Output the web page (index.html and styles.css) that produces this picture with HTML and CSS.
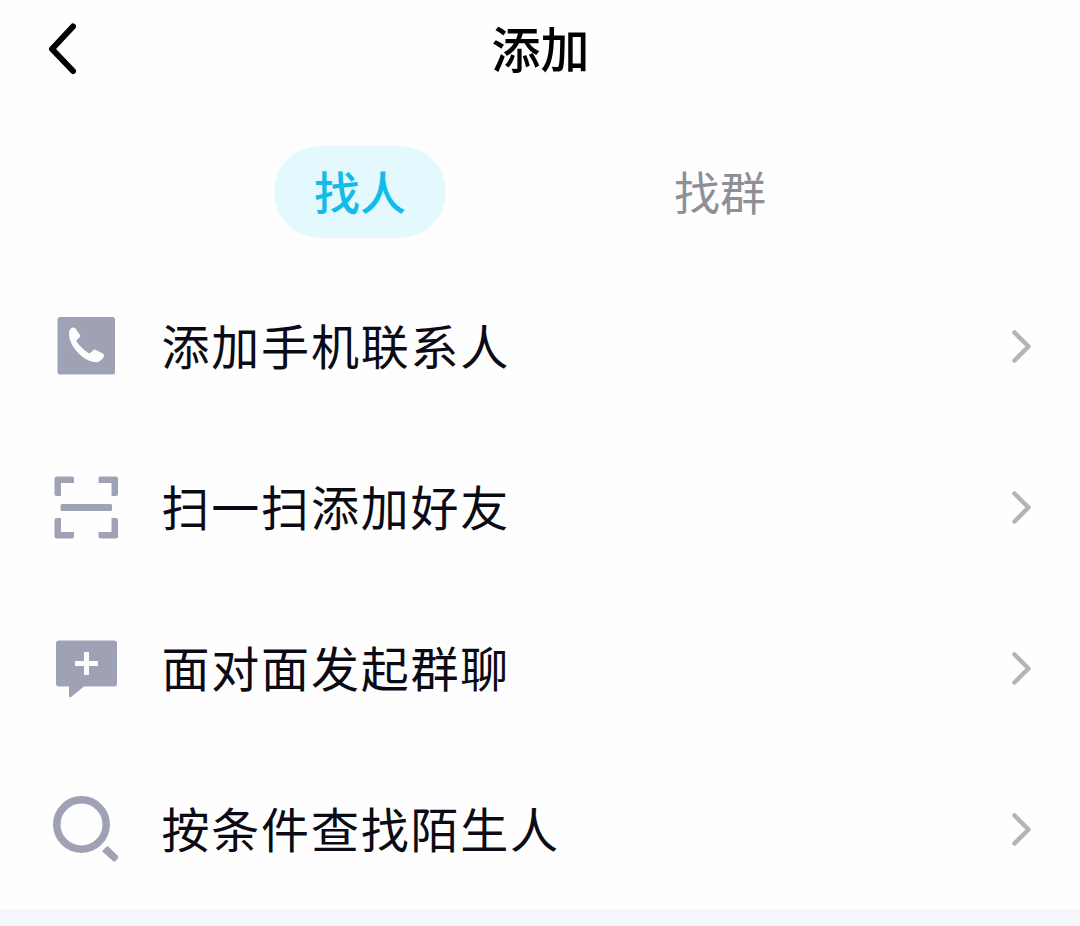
FILE: index.html
```html
<!DOCTYPE html>
<html lang="zh-CN">
<head>
<meta charset="utf-8">
<title>添加</title>
<link rel="stylesheet" href="styles.css">
</head>
<body>
<main class="page">
  <header class="header">
    <svg class="back" viewBox="0 0 32 54"><path d="M26 4.500 5 27 26 49"/></svg>
    <h1 class="title">添加</h1>
  </header>
  <nav class="tabs">
    <span class="tab tab-active">找人</span>
    <span class="tab">找群</span>
  </nav>
  <section class="list">
    <div class="row">
      <svg class="icon" viewBox="0 0 72 72"><rect x="7.500" y="7" width="57.500" height="57.500" rx="2.500"/><path class="cut" d="M19 22c.5-3.500 4.500-6 6.500-3.500l4.800 7c.5 1-3 3.500-4 5.500 2.800 4.500 8 9.500 13 12.500 2.500-1 4-4.300 5.500-4l8 4c2 1.500 1 4-.5 5.500-2 2.500-5 3.500-7.500 3C32.500 51 18 35 19 22z"/></svg>
      <span class="label">添加手机联系人</span>
      <svg class="arrow" viewBox="0 0 24 36"><path d="m4.500 4.500 14 14-14 14"/></svg>
    </div>
    <div class="row">
      <svg class="icon" viewBox="0 0 72 72"><path d="M7 5.500h15a2 2 0 0 1 2 2V12H11v13H6.500a2 2 0 0 1-2-2V8a2.500 2.500 0 0 1 2.500-2.500zM65.500 5.500h-15a2 2 0 0 0-2 2V12h13v13H66a2 2 0 0 0 2-2V8a2.500 2.500 0 0 0-2.500-2.500zM7 67.500h15a2 2 0 0 0 2-2V61H11V47H6.500a2 2 0 0 0-2 2v16A2.500 2.500 0 0 0 7 67.500zM65.500 67.500h-15a2 2 0 0 1-2-2V61h13V47H66a2 2 0 0 1 2 2v16a2.500 2.500 0 0 1-2.500 2.500z"/><rect x="10.500" y="33" width="51.500" height="7" rx="1.500"/></svg>
      <span class="label">扫一扫添加好友</span>
      <svg class="arrow" viewBox="0 0 24 36"><path d="m4.500 4.500 14 14-14 14"/></svg>
    </div>
    <div class="row">
      <svg class="icon" viewBox="0 0 72 72"><path d="M9 8.500h55a3 3 0 0 1 3 3v40a3 3 0 0 1-3 3H34L21 65q-2 1-2-1v-9.500H9a3 3 0 0 1-3-3v-40a3 3 0 0 1 3-3z"/><path class="cut" d="M34 20h5v9h9v5h-9v9h-5v-9h-9v-5h9z"/></svg>
      <span class="label">面对面发起群聊</span>
      <svg class="arrow" viewBox="0 0 24 36"><path d="m4.500 4.500 14 14-14 14"/></svg>
    </div>
    <div class="row">
      <svg class="icon" viewBox="0 0 72 72"><circle class="line" cx="31.500" cy="31.500" r="24.700"/><path d="m52.700 57.500 3.800-3.800q1-1 2 0l9.300 9q1 1 .2 2.500L65.500 68q-1.200 1-2.500 0l-10.200-9q-1-.8-.1-1.500z"/></svg>
      <span class="label">按条件查找陌生人</span>
      <svg class="arrow" viewBox="0 0 24 36"><path d="m4.500 4.500 14 14-14 14"/></svg>
    </div>
  </section>
  <footer class="divider"></footer>
</main>
</body>
</html>
```
FILE: styles.css
```css
* { box-sizing: border-box; }
body {
  margin: 0;
  background: #fefefe;
  font-family: "Noto Sans CJK SC", sans-serif;
}
.page {
  display: flex;
  flex-direction: column;
  height: 926px;
  overflow: hidden;
}
.header {
  display: grid;
  grid-template-columns: 1fr auto 1fr;
  align-items: center;
  height: 98px;
  padding: 0 46px 0 47px;
}
.back {
  width: 32px;
  height: 54px;
  fill: none;
  stroke: #000;
  stroke-width: 6;
  stroke-linecap: round;
  stroke-linejoin: round;
}
.title {
  margin: 0;
  padding-bottom: 5px;
  font-size: 49px;
  font-weight: 500;
  line-height: 72px;
  color: #000;
}
.tabs {
  display: flex;
  justify-content: space-around;
  height: 167px;
  padding: 48px 180px 0;
}
.tab {
  width: 172px;
  height: 92px;
  border-radius: 46px;
  font-size: 46px;
  line-height: 88px;
  text-align: center;
  color: #8e8f99;
}
.tab-active {
  background: #e3f9fe;
  font-weight: 500;
  color: #12bbe8;
}
.row {
  display: flex;
  align-items: center;
  height: 161.200px;
  padding: 0 46px 0 50px;
}
.icon {
  width: 72px;
  height: 72px;
  fill: #9fa1b5;
}
.cut { fill: #fefefe; }
.line {
  fill: none;
  stroke: #9fa1b5;
  stroke-width: 7.500;
}
.label {
  flex: 1;
  margin-left: 39.500px;
  padding-bottom: 4px;
  font-size: 48px;
  line-height: 72px;
  letter-spacing: 1.800px;
  color: #0b0b16;
}
.arrow {
  width: 24px;
  height: 36px;
  fill: none;
  stroke: #b4b4b8;
  stroke-width: 4.500;
  stroke-linecap: round;
  stroke-linejoin: round;
}
.divider {
  flex: 1;
  background: #f5f5fc;
}
```
